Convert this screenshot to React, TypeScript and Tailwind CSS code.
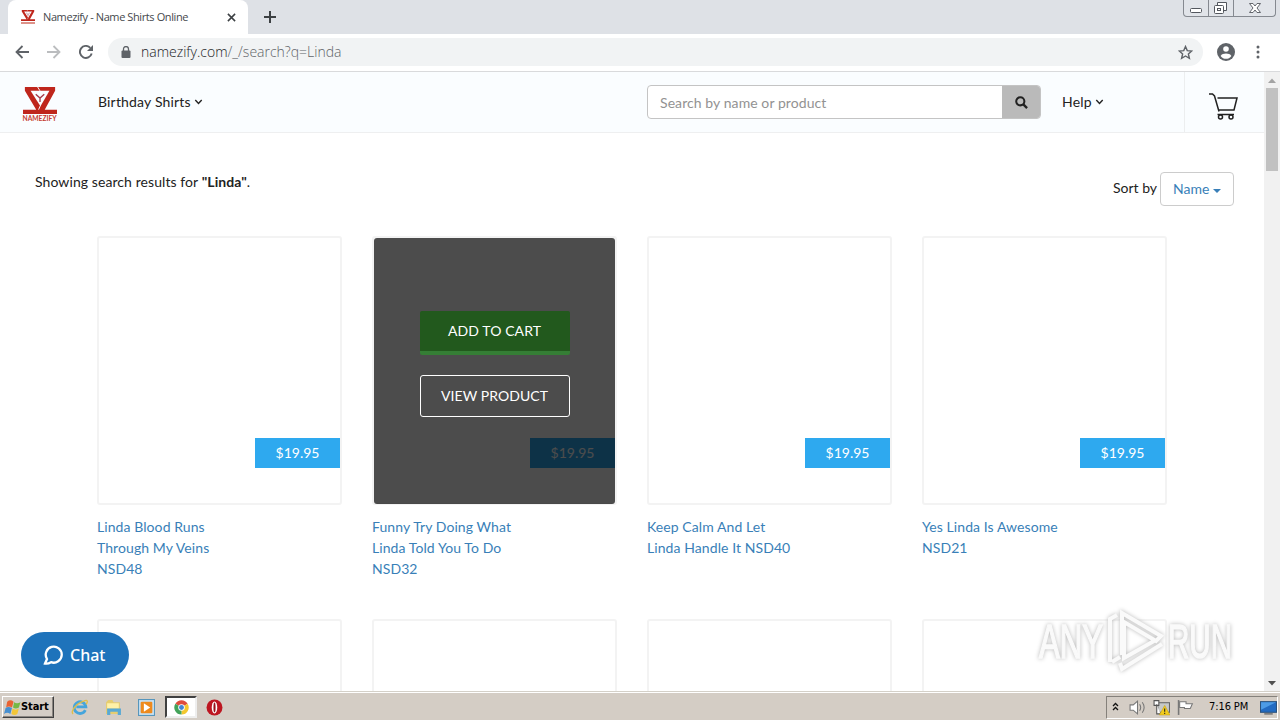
import type { ReactNode } from 'react';

type Product = {
  lines: string[];
  price: string;
  hovered?: boolean;
};

const PRODUCTS: Product[] = [
  { lines: ['Linda Blood Runs', 'Through My Veins', 'NSD48'], price: '$19.95' },
  { lines: ['Funny Try Doing What', 'Linda Told You To Do', 'NSD32'], price: '$19.95', hovered: true },
  { lines: ['Keep Calm And Let', 'Linda Handle It NSD40'], price: '$19.95' },
  { lines: ['Yes Linda Is Awesome', 'NSD21'], price: '$19.95' },
];

function LogoMark({ className }: { className?: string }) {
  return (
    <svg viewBox="0 0 36 28" className={className} preserveAspectRatio="none">
      <path d="M2 0H34V4L23 23.500H36V28H0V23.500H14L2 4Z" fill="#bf261c" />
      <path d="M8 4H28L18.500 20Z" fill="#fafdff" />
      <path d="M15.500 0L18 4M18.500 19L16.500 23.500" stroke="#fafdff" strokeWidth="1" />
      <path d="M13.500 7.500L18 11.500L22.500 7.500M18 11.500V15.500" stroke="#a43a49" strokeWidth="1.400" fill="none" />
    </svg>
  );
}

function Chevron({ className }: { className?: string }) {
  return (
    <svg viewBox="0 0 8 6" className={className} fill="none" stroke="#222" strokeWidth="1.400">
      <path d="M0.800 1L4 4.500L7.200 1" />
    </svg>
  );
}

function TabStrip() {
  return (
    <div className="flex h-[34px] shrink-0 justify-between bg-[#dee1e6]">
      <div className="flex">
        <div className="ml-2 flex h-[34px] w-[240px] items-center rounded-t-lg bg-white pl-[13px] font-['Open_Sans',sans-serif] text-[12px] text-[#45484c]">
          <div className="flex w-[14px] flex-col">
            <LogoMark className="h-[11px] w-[14px]" />
            <div className="mt-px h-[2px] bg-[#dd9289]" />
          </div>
          <span className="ml-2 w-[146px] whitespace-nowrap text-[11px] tracking-[-0.400px]">Namezify - Name Shirts Online</span>
          <svg viewBox="0 0 10 10" className="ml-[38px] size-[9px]" stroke="#3c4043" strokeWidth="1.700">
            <path d="M1 1L9 9M9 1L1 9" />
          </svg>
        </div>
        <svg viewBox="0 0 12 12" className="mt-[11px] ml-4 size-[12px]" stroke="#3c4043" strokeWidth="2">
          <path d="M6 0V12M0 6H12" />
        </svg>
      </div>
      <div className="mr-1 flex h-[17px] w-[93px] rounded-b-[4px] border border-t-0 border-[#858990] bg-[#e1e4e9]">
        <svg viewBox="0 0 91 16" className="h-4 w-[91px]" fill="none" stroke="#53575e">
          <path d="M24.500 0V16M49.500 0V16" stroke="#858990" />
          <rect x="6.500" y="8.500" width="11" height="4" rx="1" fill="#fff" />
          <path d="M33.500 5V2.500H42.500V10.500H39.500" fill="#fff" />
          <rect x="30.500" y="5.500" width="9" height="8" rx="1" fill="#fff" />
          <rect x="33.500" y="8.500" width="3" height="2" />
          <path d="M65.500 3.500H69L71 6L73 3.500H76.500L73 8L76.500 12.500H73L71 10L69 12.500H65.500L69 8Z" fill="#fff" strokeWidth="0.900" />
        </svg>
      </div>
    </div>
  );
}

function Toolbar() {
  return (
    <div className="flex h-[38px] shrink-0 items-center border-b border-[#d9dadc] bg-white pb-px">
      <svg viewBox="0 0 14 14" className="ml-[15px] size-[14px]" fill="none" stroke="#5f6368" strokeWidth="1.800">
        <path d="M14 7H1.500M7.500 1L1.500 7L7.500 13" />
      </svg>
      <svg viewBox="0 0 14 14" className="ml-[18px] size-[14px]" fill="none" stroke="#bbbdbf" strokeWidth="1.800">
        <path d="M0 7H12.500M6.500 1L12.500 7L6.500 13" />
      </svg>
      <svg viewBox="0 0 14 14" className="ml-[18px] size-[14px]" fill="none" stroke="#5f6368" strokeWidth="1.900">
        <path d="M12.700 8.500A6 6 0 1 1 11.300 2.800" />
        <path d="M14 0V6H8Z" fill="#5f6368" stroke="none" />
      </svg>
      <div className="ml-[15px] flex h-7 w-[1095px] items-center rounded-full bg-[#f1f3f4] pr-[10px] pl-[13px]">
        <svg viewBox="0 0 10 12" className="h-[12px] w-[10px]">
          <path d="M2.500 5V3A2.500 2.500 0 0 1 7.500 3V5" fill="none" stroke="#5f6368" strokeWidth="1.300" />
          <rect x="0.500" y="4.500" width="9" height="7.500" rx="1" fill="#5f6368" />
        </svg>
        <span className="mb-px ml-[10px] whitespace-nowrap font-['Open_Sans',sans-serif] text-[14px] font-light text-[#5f6368]">
          <span className="text-[#202124]">namezify.com</span>/_/search?q=Linda
        </span>
        <svg viewBox="0 0 24 24" className="ml-auto size-[15px]" fill="none" stroke="#5f6368" strokeWidth="2.300">
          <path d="M12 2.500L14.800 9L22 9.600L16.600 14.300L18.200 21.300L12 17.600L5.800 21.300L7.400 14.300L2 9.600L9.200 9Z" />
        </svg>
      </div>
      <svg viewBox="0 0 18 18" className="ml-[14px] size-[18px]">
        <circle cx="9" cy="9" r="9" fill="#5f6368" />
        <circle cx="9" cy="6" r="2.800" fill="#fff" />
        <path d="M3.600 13C4.500 11.300 7 10.600 9 10.600S13.500 11.300 14.400 13C13 15 11 15.800 9 15.800S5 15 3.600 13Z" fill="#fff" />
      </svg>
      <svg viewBox="0 0 4 14" className="ml-[21px] h-[14px] w-1" fill="#5f6368">
        <circle cx="2" cy="2" r="1.500" />
        <circle cx="2" cy="7" r="1.500" />
        <circle cx="2" cy="12" r="1.500" />
      </svg>
    </div>
  );
}

function SiteHeader() {
  return (
    <header className="flex h-[61px] shrink-0 border-b border-[#eeeff0] bg-[#fafdff]">
      <div className="mt-[15px] ml-[22px] flex w-[36px] flex-col">
        <LogoMark className="ml-px h-[27px] w-[34px]" />
        <svg viewBox="0 0 36 8" className="h-[8px] w-[36px]">
          <text x="0.500" y="6.500" textLength="34" lengthAdjust="spacingAndGlyphs" fill="#c63c31" fontFamily="Lato, sans-serif" fontSize="6.500" fontWeight="700">
            NAMEZIFY
          </text>
        </svg>
      </div>
      <div className="ml-10 flex h-[60px] items-center">
        <span className="mb-[2px] w-[93px] whitespace-nowrap tracking-[0.180px]">Birthday Shirts</span>
        <Chevron className="ml-[3px] h-[6px] w-[9px]" />
      </div>
      <div className="mt-[13px] ml-auto flex h-[34px] w-[394px] overflow-hidden rounded border border-[#c4c4c4] bg-white">
        <span className="flex flex-1 items-center pl-3 tracking-[0.080px] text-[#929292]">Search by name or product</span>
        <span className="flex w-[38px] items-center justify-center bg-[#bababa]">
          <svg viewBox="0 0 14 14" className="size-[13px]" fill="none" stroke="#222">
            <circle cx="5.700" cy="5.700" r="4.400" strokeWidth="2.200" />
            <path d="M9 9L13 13" strokeWidth="2.500" />
          </svg>
        </span>
      </div>
      <div className="ml-[21px] flex h-[60px] w-[122px] items-center">
        <span className="mb-[2px] w-[30px] tracking-[0.200px]">Help</span>
        <Chevron className="ml-[3px] h-[6px] w-[9px]" />
      </div>
      <div className="w-[80px] border-l border-[#eceeef] pt-[20px] pl-[24px]">
        <svg viewBox="0 0 30 28" className="h-[28px] w-[30px]" fill="none" stroke="#222" strokeWidth="1.500">
          <path d="M0 2H3.500L5.500 4L10 19.500M8.500 6H28L25 18H10M8.500 22.500H25" />
          <circle cx="11.500" cy="25" r="2" />
          <circle cx="22" cy="25" r="2" />
        </svg>
      </div>
    </header>
  );
}

function Overlay() {
  return (
    <div className="absolute inset-x-0 top-0 -bottom-px flex flex-col items-center rounded-[3px] bg-black/70 pt-[73px] text-[14px] text-white">
      <div className="flex h-[44px] w-[150px] items-center justify-center rounded-[2px] border-b-4 border-[#357e35] bg-[#22591d] pb-[2px] tracking-[0.100px]">
        ADD TO CART
      </div>
      <div className="mt-5 flex h-[42px] w-[150px] items-center justify-center rounded-[3px] border border-white pb-[2px] tracking-[0.080px]">
        VIEW PRODUCT
      </div>
    </div>
  );
}

function ProductFrame({ children }: { children?: ReactNode }) {
  return (
    <div className="relative flex h-[269px] flex-col items-end rounded-[3px] border-2 border-[#f3f3f3] pt-[200px]">
      {children}
    </div>
  );
}

function ProductCard({ product }: { product: Product }) {
  return (
    <div>
      <ProductFrame>
        <div className="flex h-[30px] w-[85px] items-center justify-center bg-[#2ea9ef] pb-[2px] text-[14px] text-white">
          {product.price}
        </div>
        {product.hovered ? <Overlay /> : null}
      </ProductFrame>
      <div className="mt-[11px] h-[64px] text-[14px] leading-[21px] tracking-[0.080px] text-[#397fb8]">
        {product.lines.map((line) => (
          <div key={line} className="whitespace-nowrap">
            {line}
          </div>
        ))}
      </div>
    </div>
  );
}

function Scrollbar() {
  return (
    <div className="flex w-4 shrink-0 flex-col items-center bg-[#f1f1f1]">
      <svg viewBox="0 0 16 16" className="size-4">
        <path d="M4 11L8 6.500L12 11Z" fill="#a3a3a3" />
      </svg>
      <div className="h-[83px] w-[12px] bg-[#c1c1c1]" />
      <svg viewBox="0 0 16 16" className="mt-auto size-4">
        <path d="M4 6L8 10.500L12 6Z" fill="#505050" />
      </svg>
    </div>
  );
}

function Watermark() {
  return (
    <svg viewBox="0 0 212 76" className="absolute top-[602px] left-[1030px] h-[76px] w-[212px]">
      <g
        className="[filter:drop-shadow(0_0_2px_#b8b8b8)]"
        fill="#fafafa"
        stroke="#fafafa"
        strokeWidth="1.600"
        fontFamily="'Liberation Sans Narrow', 'Liberation Sans', sans-serif"
        fontSize="49"
      >
        <text x="9" y="56" textLength="64" lengthAdjust="spacingAndGlyphs">
          ANY
        </text>
        <text x="138" y="56" textLength="64" lengthAdjust="spacingAndGlyphs">
          RUN
        </text>
        <g fill="none" strokeWidth="4">
          <path d="M80 60V17L87 13M92 53V11L131 34L126 39L94 20V56L124 39" />
          <path d="M82 60L90 55M90 61L92 67L132 42" />
        </g>
      </g>
    </svg>
  );
}

function TaskIcon({ children, className }: { children: ReactNode; className?: string }) {
  return (
    <svg viewBox="0 0 16 16" className={`size-[17px] ${className ?? ''}`}>
      {children}
    </svg>
  );
}

function Taskbar() {
  return (
    <footer className="flex h-[29px] shrink-0 items-center border-t border-[#d4d0c8] bg-[#d4cdc5] font-['DejaVu_Sans_Condensed','DejaVu_Sans',sans-serif] text-[11px] text-black shadow-[inset_0_1px_0_#fff]">
      <div className="mt-[2px] ml-[2px] flex h-[22px] w-[52px] items-center border border-t-white border-r-[#404040] border-b-[#404040] border-l-white pl-px shadow-[inset_-1px_-1px_0_#8a8580]">
        <TaskIcon className="shrink-0">
          <path d="M3 2.500Q6 0 9 2.500L7.500 8Q4.500 6 2 8Z" fill="#e96333" />
          <path d="M9.500 3Q12 5 15.500 3L14 8Q11 10 8.500 8Z" fill="#76b845" />
          <path d="M1.500 8.500Q4 6.500 7.500 8.500L6 14Q3 12 0 14Z" fill="#468fd0" />
          <path d="M8 9Q11 11 14 9L12.500 14Q10 16 7 14Z" fill="#f3c637" />
        </TaskIcon>
        <span className="w-[30px] whitespace-nowrap font-bold tracking-[-0.100px]">Start</span>
      </div>
      <TaskIcon className="mt-[2px] ml-[17px]">
        <path d="M13.500 10.500A5.500 5.500 0 1 1 14 7.500H5" fill="none" stroke="#45a5dc" strokeWidth="2.600" />
        <path d="M2 14C-1 12 5 4 12 2C16 0 16 3 14 5" fill="none" stroke="#dfbe49" strokeWidth="1.300" />
      </TaskIcon>
      <TaskIcon className="mt-[2px] ml-[17px]">
        <path d="M1 3L3 1H7L8 3H14V14H1Z" fill="#e6cd70" />
        <path d="M2 4H13V9H2Z" fill="#fff1a7" />
        <path d="M2 15V9H15V15H12V12H5V15Z" fill="#59a9d4" />
      </TaskIcon>
      <TaskIcon className="mt-[2px] ml-[16px]">
        <rect x="0.500" y="0.500" width="15" height="15" fill="#c7e1f3" stroke="#5796bc" />
        <rect x="2.500" y="2.500" width="11" height="11" rx="1" fill="#ee8a1d" />
        <path d="M5.500 4L11.500 8L5.500 12Z" fill="#fff" />
      </TaskIcon>
      <div className="mt-[2px] ml-[10px] flex h-[22px] w-[32px] items-center justify-center border-2 border-t-[#404040] border-r-[#eee] border-b-[#eee] border-l-[#404040] bg-white">
        <svg viewBox="0 0 16 16" className="size-[15px]">
          <path d="M8 8L1.500 4A7.500 7.500 0 0 1 14.500 4Z" fill="#df4c3c" />
          <path d="M8 8L14.500 4A7.500 7.500 0 0 1 8 15.500Z" fill="#f3c72e" />
          <path d="M8 8V15.500A7.500 7.500 0 0 1 1.500 4Z" fill="#43a35a" />
          <circle cx="8" cy="8" r="3.500" fill="#fff" />
          <circle cx="8" cy="8" r="2.600" fill="#4285d4" />
        </svg>
      </div>
      <TaskIcon className="mt-[2px] ml-[9px]">
        <circle cx="8" cy="8" r="7.500" fill="#bd1621" />
        <ellipse cx="8" cy="8" rx="2.600" ry="5.600" fill="#fff" />
        <ellipse cx="8" cy="8" rx="1" ry="4.600" fill="#99101a" />
      </TaskIcon>
      <div className="mt-[2px] mr-[2px] ml-auto flex h-[23px] w-[172px] items-center border border-t-[#85817b] border-r-white border-b-white border-l-[#85817b]">
        <svg viewBox="0 0 7 9" className="mb-[2px] ml-[5px] h-[9px] w-[7px]" fill="none" stroke="#111" strokeWidth="1.300">
          <path d="M1 4L3.500 1.500L6 4M1 8L3.500 5.500L6 8" />
        </svg>
        <TaskIcon className="ml-[10px]">
          <path d="M1 5.500H4L8 2V14L4 10.500H1Z" fill="#fff" stroke="#777" />
          <path d="M10 5Q12 8 10 11M12.500 3Q16 8 12.500 13" fill="none" stroke="#777" />
        </TaskIcon>
        <TaskIcon className="ml-[7px]">
          <rect x="4.500" y="3.500" width="11" height="9" fill="#c6c8c8" stroke="#666" />
          <path d="M1 1.500H5.500V6H1ZM3.500 5V14H7" fill="#fff" stroke="#555" />
          <path d="M11 6L16 15H6Z" fill="#f2cc1e" stroke="#c39a0b" strokeWidth="0.500" />
          <path d="M11 9V12M11 13V14" stroke="#222" />
        </TaskIcon>
        <TaskIcon className="ml-[7px]">
          <path d="M1.500 1V15" stroke="#777" strokeWidth="1.500" />
          <path d="M2.500 2.500H8.500V4.500H14.500L12.500 9H7V8H2.500Z" fill="#fff" stroke="#777" />
        </TaskIcon>
        <span className="ml-[15px] w-[40px] whitespace-nowrap tracking-[-0.100px]">7:16 PM</span>
        <TaskIcon className="ml-[11px]">
          <rect x="0.500" y="2.500" width="15" height="10" fill="#226bc2" stroke="#2b527c" />
          <path d="M1 3H15L1 10Z" fill="#4d9ce6" />
          <path d="M4 14H12" stroke="#777" strokeWidth="1.500" />
        </TaskIcon>
      </div>
    </footer>
  );
}

export default function App() {
  return (
    <div className="relative flex h-[720px] w-[1280px] flex-col overflow-hidden bg-white font-['Lato',sans-serif] text-[14px] text-[#222]">
      <TabStrip />
      <Toolbar />
      <div className="flex h-[619px] shrink-0 overflow-hidden">
        <div className="flex min-w-0 flex-1 flex-col">
          <SiteHeader />
          <div className="flex justify-between pr-[30px] pl-[35px]">
            <p className="mt-[38px] leading-[21px] tracking-[0.080px]">
              Showing search results for <b>"Linda"</b>.
            </p>
            <div className="mt-[39px] flex h-[34px] items-center">
              <span className="mr-[3px] -mt-[4px] w-[44px] whitespace-nowrap">Sort by</span>
              <div className="flex h-[34px] w-[74px] items-center rounded border border-[#ccc] pl-3 text-[#397fb8]">
                <span className="mb-[2px] w-[38px]">Name</span>
                <svg viewBox="0 0 8 4" className="mt-1 ml-[2px] h-1 w-2" fill="#397fb8">
                  <path d="M0 0H8L4 4Z" />
                </svg>
              </div>
            </div>
          </div>
          <main className="mt-[30px] ml-[97px] grid grid-cols-[repeat(4,245px)] gap-x-[30px] gap-y-[39px]">
            {PRODUCTS.map((product) => (
              <ProductCard key={product.lines[0]} product={product} />
            ))}
            {PRODUCTS.map((product) => (
              <ProductFrame key={`next-${product.lines[0]}`} />
            ))}
          </main>
        </div>
        <Scrollbar />
      </div>
      <Taskbar />
      <Watermark />
      <div className="absolute top-[632px] left-[21px] flex h-[46px] w-[108px] items-center rounded-full bg-[#1e73bb] pl-[22px] font-['Noto_Sans',sans-serif] text-[16px] font-medium text-white">
        <svg viewBox="0 0 20 20" className="size-[20px]" fill="none" stroke="#fff" strokeWidth="2.300">
          <path d="M2 18.500L4 14A8 8 0 1 1 8 17.200Q5 19 2 18.500Z" />
        </svg>
        <span className="ml-[7px]">Chat</span>
      </div>
    </div>
  );
}
